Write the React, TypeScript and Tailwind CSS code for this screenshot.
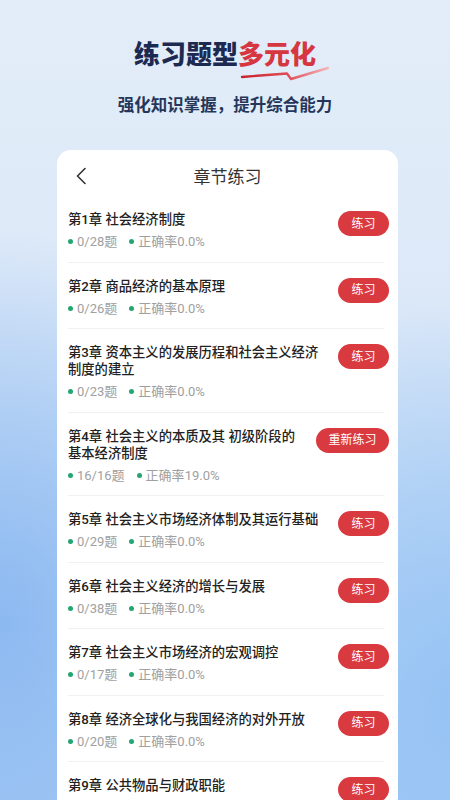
import React from 'react';

interface Chapter {
  no: number;
  title: string;
  done: string;
  rate: string;
  redo?: boolean;
}

const chapters: Chapter[] = [
  { no: 1, title: '社会经济制度', done: '0/28', rate: '0.0%' },
  { no: 2, title: '商品经济的基本原理', done: '0/26', rate: '0.0%' },
  { no: 3, title: '资本主义的发展历程和社会主义经济制度的建立', done: '0/23', rate: '0.0%' },
  { no: 4, title: '社会主义的本质及其 初级阶段的基本经济制度', done: '16/16', rate: '19.0%', redo: true },
  { no: 5, title: '社会主义市场经济体制及其运行基础', done: '0/29', rate: '0.0%' },
  { no: 6, title: '社会主义经济的增长与发展', done: '0/38', rate: '0.0%' },
  { no: 7, title: '社会主义市场经济的宏观调控', done: '0/17', rate: '0.0%' },
  { no: 8, title: '经济全球化与我国经济的对外开放', done: '0/20', rate: '0.0%' },
  { no: 9, title: '公共物品与财政职能', done: '0/15', rate: '0.0%' },
];

const font = { fontFamily: 'Roboto, "Noto Sans CJK SC", sans-serif' };

function Squiggle() {
  return (
    <svg
      width="92"
      height="20"
      viewBox="0 0 92 20"
      className="absolute left-[2px] top-[26px]"
      fill="none"
    >
      <defs>
        <linearGradient id="sq" x1="0" y1="0" x2="1" y2="0">
          <stop offset="0%" stopColor="#c9202c" />
          <stop offset="55%" stopColor="#e0505a" />
          <stop offset="100%" stopColor="#f4b6bc" />
        </linearGradient>
      </defs>
      <path
        d="M2 14 L47 10.5 L51 16 L88 5"
        stroke="url(#sq)"
        strokeWidth="2.4"
        strokeLinecap="round"
        strokeLinejoin="round"
      />
    </svg>
  );
}

function Row({ c, last }: { c: Chapter; last: boolean }) {
  return (
    <div>
      <div className="ml-[11px] mr-[9px] flex items-start gap-[14px] pt-[15px] pb-[11.5px]">
        <div className="min-w-0 flex-1">
          <div className="text-[13.3px] leading-[17px] font-medium text-[#222]">
            第{c.no}章 {c.title}
          </div>
          <div className="mt-[5px] flex items-center text-[13px] leading-[17px] text-[#a0a0a0]">
            <span className="h-[5px] w-[5px] rounded-full bg-[#23a672]" />
            <span className="ml-[4px]">{c.done}题</span>
            <span className="ml-[12px] h-[5px] w-[5px] rounded-full bg-[#23a672]" />
            <span className="ml-[4px]">正确率{c.rate}</span>
          </div>
        </div>
        <button
          className={`${c.redo ? 'w-[73px]' : 'w-[51px]'} flex h-[25px] shrink-0 items-center justify-center rounded-full bg-[#d93a40] text-[12px] text-white`}
        >
          {c.redo ? '重新练习' : '练习'}
        </button>
      </div>
      {!last && <div className="ml-[11px] mr-[14px] h-px bg-[#f1f1f1]" />}
    </div>
  );
}

export default function App() {
  return (
    <div
      style={font}
      className="relative h-[800px] w-[450px] overflow-hidden bg-[radial-gradient(ellipse_at_0%_78%,#8cb9f1_0%,rgba(140,185,241,0)_45%),radial-gradient(ellipse_at_100%_88%,#96c3f4_0%,rgba(150,195,244,0)_40%),linear-gradient(180deg,#e3edf9_0%,#dde9f8_35%,#c3dbf6_65%,#a9cdf5_100%)]"
    >
      {/* headline */}
      <div className="flex flex-col items-center pt-[37px]">
        <div className="flex text-[26px] leading-[36px] font-black text-[#1c2a52]">
          <span>练习题型</span>
          <span className="relative text-[#d6363f]">
            多元化
            <Squiggle />
          </span>
        </div>
        <div className="mt-[21px] text-[16.5px] leading-[24px] font-bold text-[#26365a]">
          强化知识掌握，提升综合能力
        </div>
      </div>

      {/* card */}
      <div className="ml-[57px] mt-[32px] w-[341px] rounded-[14px] bg-white">
        <div className="relative flex h-[46px] items-center justify-center pt-[7px]">
          <svg
            width="12"
            height="18"
            viewBox="0 0 12 18"
            className="absolute left-[18px] top-[17px]"
            fill="none"
          >
            <path d="M10 1.5 L2.5 9 L10 16.5" stroke="#333" strokeWidth="1.6" strokeLinecap="round" strokeLinejoin="round" />
          </svg>
          <span className="text-[17px] leading-[24px] text-[#333]">章节练习</span>
        </div>
        {chapters.map((c, i) => (
          <Row key={c.no} c={c} last={i === chapters.length - 1} />
        ))}
      </div>
    </div>
  );
}
